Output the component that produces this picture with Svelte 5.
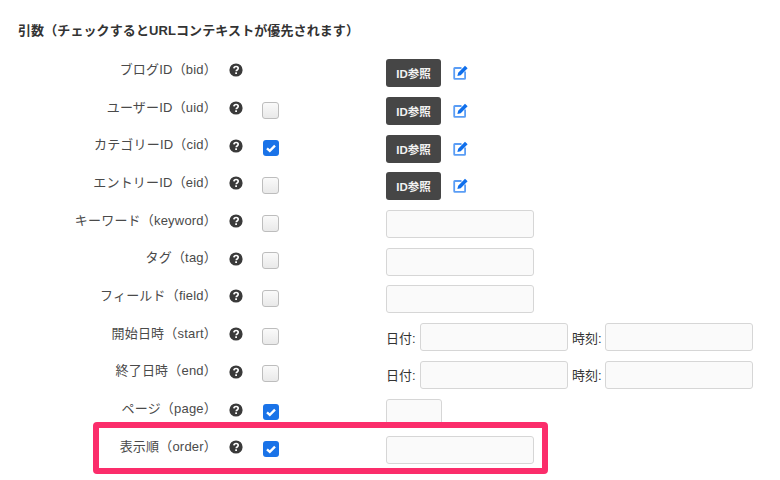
<script>
  const rows = [
    { label: 'ブログID（bid）', check: null, kind: 'id' },
    { label: 'ユーザーID（uid）', check: false, kind: 'id' },
    { label: 'カテゴリーID（cid）', check: true, kind: 'id' },
    { label: 'エントリーID（eid）', check: false, kind: 'id' },
    { label: 'キーワード（keyword）', check: false, kind: 'text' },
    { label: 'タグ（tag）', check: false, kind: 'text' },
    { label: 'フィールド（field）', check: false, kind: 'text' },
    { label: '開始日時（start）', check: false, kind: 'date' },
    { label: '終了日時（end）', check: false, kind: 'date' },
    { label: 'ページ（page）', check: true, kind: 'small' },
    { label: '表示順（order）', check: true, kind: 'text' }
  ];
</script>

<main class="page">
  <h2 class="title">引数（チェックするとURLコンテキストが優先されます）</h2>
  <div class="rows">
    {#each rows as row}
      <div class="row">
        <div class="label">{row.label}</div>
        <div class="help">
          <svg viewBox="0 0 14 14" width="14" height="14" aria-hidden="true">
            <circle cx="7" cy="7" r="6.6" fill="#3a3a3a" />
            <path d="M4.9 5.4c.1-1.2 1-1.9 2.2-1.9s2.1.7 2.1 1.8c0 .8-.4 1.2-1.1 1.7-.5.3-.8.6-.8 1.2" fill="none" stroke="#fff" stroke-width="1.7" />
            <rect x="6.2" y="9.3" width="1.8" height="1.7" fill="#fff" />
          </svg>
        </div>
        <div class="checkcell">
          {#if row.check === true}
            <span class="check on">
              <svg viewBox="0 0 16 16" width="16" height="16" aria-hidden="true">
                <path d="M4 8.3l2.8 2.6L12 5.6" fill="none" stroke="#fff" stroke-width="2.3" />
              </svg>
            </span>
          {:else if row.check === false}
            <span class="check"></span>
          {/if}
        </div>
        <div class="control">
          {#if row.kind === 'id'}
            <button class="btn" type="button">ID参照</button>
            <svg class="edit" viewBox="0 0 15 15" width="15" height="15" aria-hidden="true">
              <path d="M8.5 3H1.8a.6.6 0 0 0-.6.6v9.7c0 .3.3.6.6.6h9.7c.3 0 .6-.3.6-.6V6.6" fill="none" stroke="#5a9df5" stroke-width="1.8" />
              <path d="M4.4 10.9l.8-3.1L12 .7l2.6 2.6-6.9 7z" fill="#0f6fec" />
            </svg>
          {:else if row.kind === 'text'}
            <input class="field" type="text" />
          {:else if row.kind === 'small'}
            <input class="field small" type="text" />
          {:else}
            <span class="unit">日付:</span>
            <input class="field" type="text" />
            <span class="unit second">時刻:</span>
            <input class="field" type="text" />
          {/if}
        </div>
      </div>
    {/each}
    <div class="highlight"></div>
  </div>
</main>

<style>
  :global(body) {
    margin: 0;
    background: #fff;
  }
  .page {
    width: 780px;
    height: 480px;
    overflow: hidden;
    box-sizing: border-box;
    padding-top: 22px;
    font-family: "Liberation Sans", "Noto Sans CJK JP", sans-serif;
    color: #444;
  }
  .title {
    margin: 0 0 0 18px;
    font-size: 13px;
    line-height: 17px;
    font-weight: 700;
    color: #333;
    letter-spacing: 0.1px;
  }
  .rows {
    position: relative;
    margin-top: 15px;
  }
  .row {
    display: grid;
    grid-template-columns: 217px 45px 124px 1fr;
    align-items: center;
    height: 37.7px;
  }
  .label {
    text-align: right;
    font-size: 13px;
    line-height: 18px;
    color: #4a4a4a;
    margin-top: -6px;
    letter-spacing: 0.2px;
    white-space: nowrap;
  }
  .help {
    display: flex;
    padding-left: 12px;
    margin-top: -5px;
  }
  .checkcell {
    margin-top: -1px;
  }
  .check {
    display: block;
    box-sizing: border-box;
    width: 17px;
    height: 17px;
    border: 1px solid #bdbdbd;
    border-radius: 3px;
    background: linear-gradient(#fafafa, #e9e9e9);
  }
  .check.on {
    width: 16px;
    height: 16px;
    margin-left: 1px;
    border: 0;
    background: #1a73e8;
  }
  .check.on svg {
    display: block;
  }
  .control {
    display: flex;
    align-items: center;
    font-size: 13px;
    margin-top: 1px;
  }
  .btn {
    box-sizing: border-box;
    width: 55px;
    height: 28px;
    padding: 0;
    border: 0;
    border-radius: 3px;
    background: #464646;
    color: #f2f2f2;
    font: 700 11.5px "Liberation Sans", "Noto Sans CJK JP", sans-serif;
  }
  .edit {
    margin-left: 12px;
    margin-top: -1px;
  }
  .field {
    box-sizing: border-box;
    width: 148px;
    height: 28px;
    margin: 0;
    border: 1px solid #d6d6d6;
    border-radius: 3px;
    background: #fafafa;
  }
  .field.small {
    width: 56px;
  }
  .unit {
    width: 34px;
    color: #333;
    white-space: nowrap;
  }
  .unit.second {
    width: 33px;
    margin-left: 4px;
  }
  .highlight {
    position: absolute;
    left: 93px;
    top: 368px;
    width: 455px;
    height: 52px;
    box-sizing: border-box;
    border: 6px solid #fb2d6b;
    border-radius: 4px;
    pointer-events: none;
  }
</style>
